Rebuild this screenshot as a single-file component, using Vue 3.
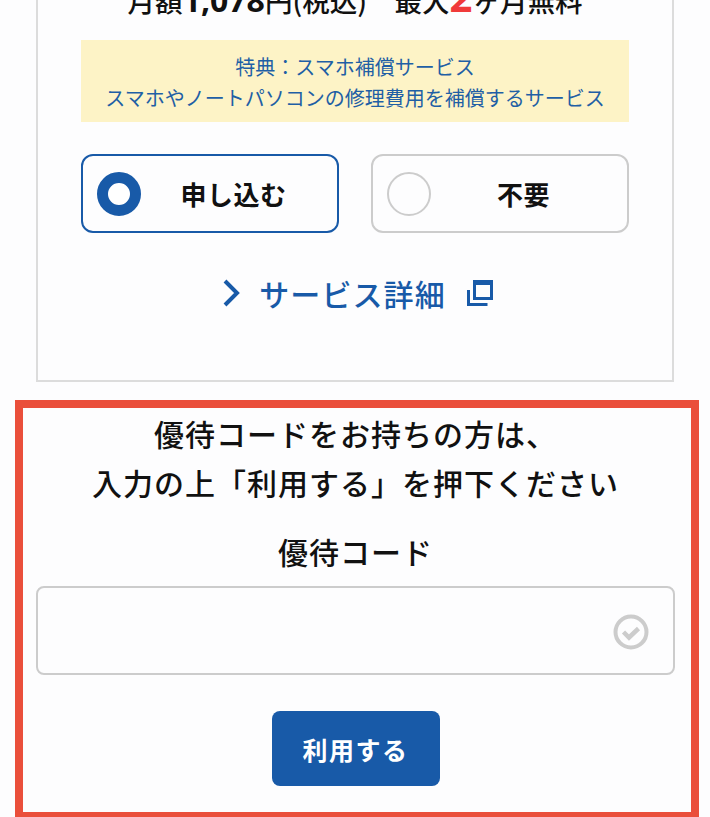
<script setup>
const copy = {
  price: '1,078',
  months: '2',
}
</script>

<template>
  <main class="page">
    <section class="card">
      <p class="price">月額<b>{{ copy.price }}</b>円(税込)　最大<b class="red">{{ copy.months }}</b>ヶ月無料</p>
      <div class="notice">
        <p>特典：スマホ補償サービス</p>
        <p>スマホやノートパソコンの修理費用を補償するサービス</p>
      </div>
      <div class="choices">
        <label class="choice on">
          <span class="radio on"></span>
          <span class="choice-text">申し込む</span>
        </label>
        <label class="choice">
          <span class="radio"></span>
          <span class="choice-text">不要</span>
        </label>
      </div>
      <a class="detail">
        <svg class="chev" width="18" height="30" viewBox="0 0 18 30" aria-hidden="true">
          <path d="M3 3l12 12L3 27" fill="none" stroke="#185aa8" stroke-width="4" />
        </svg>
        <span>サービス詳細</span>
        <svg class="ext" width="26" height="26" viewBox="0 0 26 26" aria-hidden="true">
          <path d="M7.5 1.5h17v17h-17z M6 3.5h20" fill="none" stroke="#185aa8" stroke-width="3" />
          <path d="M1.5 10v14.5h19" fill="none" stroke="#185aa8" stroke-width="3" />
        </svg>
      </a>
    </section>

    <section class="coupon">
      <p class="lead">優待コードをお持ちの方は、<br />入力の上「利用する」を押下ください</p>
      <p class="code-label">優待コード</p>
      <div class="field">
        <svg width="36" height="36" viewBox="0 0 36 36" aria-hidden="true">
          <circle cx="18" cy="18" r="15.5" fill="none" stroke="#cccccc" stroke-width="4" />
          <path d="M10.5 18l5.5 5.5 9.5-9" fill="none" stroke="#cccccc" stroke-width="4.5" />
        </svg>
      </div>
      <button class="apply" type="button">利用する</button>
    </section>
  </main>
</template>

<style scoped>
.page {
  width: 710px;
  height: 817px;
  overflow: hidden;
  background: #fdfdfe;
  color: #111;
  font-family: "Noto Sans CJK JP", "Noto Sans", sans-serif;
  box-sizing: border-box;
  padding: 0 11px 0 15px;
}
p { margin: 0; }
.card {
  margin: -23px 25px 0 21px;
  height: 405px;
  box-sizing: border-box;
  padding: 0 43px;
  border: 2px solid #dcdcdc;
  border-top: 0;
  display: flex;
  flex-direction: column;
}
.price {
  font-size: 27.5px;
  font-weight: 500;
  line-height: 40px;
  text-align: center;
  white-space: nowrap;
  height: 40px;
}
.price b { font-size: 32px; font-weight: 700; font-family: "Noto Sans", sans-serif; }
.price .red { color: #f03a3a; font-size: 40px; }
.notice {
  margin-top: 23px;
  height: 82px;
  background: #fdf3c6;
  color: #1f5fa5;
  font-size: 20px;
  line-height: 31px;
  text-align: center;
  padding-top: 11px;
  box-sizing: border-box;
  white-space: nowrap;
}
.choices {
  margin-top: 32px;
  display: grid;
  grid-template-columns: 258px 258px;
  gap: 32px;
}
.choice {
  height: 79px;
  box-sizing: border-box;
  border: 2px solid #cccccc;
  border-radius: 12px;
  display: flex;
  align-items: center;
  padding-left: 14px;
}
.choice.on { border-color: #185aa8; }
.radio {
  width: 44px;
  height: 44px;
  box-sizing: border-box;
  border: 2px solid #cccccc;
  border-radius: 50%;
  flex: none;
}
.radio.on { border: 11px solid #185aa8; background: #fff; }
.choice-text {
  flex: 1;
  text-align: center;
  font-size: 26px;
  font-weight: 700;
  letter-spacing: 0.5px;
  padding-right: 11px;
}
.detail {
  margin-top: 36px;
  padding-left: 5px;
  display: flex;
  align-items: center;
  justify-content: center;
  color: #185aa8;
  font-size: 30px;
  font-weight: 500;
  letter-spacing: 1.1px;
  line-height: 48px;
}
.chev { margin-right: 19px; }
.ext { margin-left: 21px; }
.coupon {
  margin-top: 18px;
  height: 420px;
  box-sizing: border-box;
  border: 8px solid #ea4f3b;
  padding: 1px 16px 0 13px;
  text-align: center;
}
.lead {
  font-size: 30px;
  font-weight: 500;
  line-height: 49px;
  letter-spacing: 1px;
  white-space: nowrap;
}
.code-label {
  margin-top: 20px;
  font-size: 30px;
  font-weight: 500;
  line-height: 49px;
  letter-spacing: 1px;
}
.field {
  margin-top: 10px;
  height: 89px;
  box-sizing: border-box;
  border: 2px solid #cccccc;
  border-radius: 8px;
  background: #fdfdfe;
  display: flex;
  align-items: center;
  justify-content: flex-end;
  padding: 2px 24px 0 0;
}
.apply {
  display: block;
  margin: 36px auto 0;
  width: 168px;
  height: 75px;
  border: 0;
  border-radius: 8px;
  background: #185aa8;
  color: #fff;
  font-family: "Noto Sans CJK JP", sans-serif;
  font-size: 25px;
  font-weight: 700;
  letter-spacing: 1.5px;
}
</style>
